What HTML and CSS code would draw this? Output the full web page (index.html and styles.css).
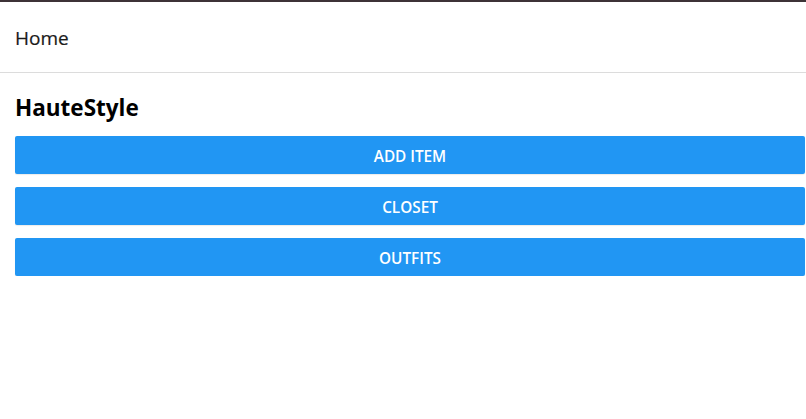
FILE: index.html
```html
<!DOCTYPE html>
<html>
<head>
<meta charset="utf-8">
<link rel="stylesheet" href="styles.css">
</head>
<body>
<div class="topbar"></div>
<header class="header"><span class="header-title">Home</span></header>
<main class="content">
  <h1 class="title">HauteStyle</h1>
  <div class="actions">
    <button class="btn">ADD ITEM</button>
    <button class="btn">CLOSET</button>
    <button class="btn">OUTFITS</button>
  </div>
</main>
</body>
</html>
```
FILE: styles.css
```css
* { box-sizing: border-box; }
html, body { margin: 0; padding: 0; background: #fff; }
body { font-family: "Open Sans", "Noto Sans", sans-serif; color: #222; }
.topbar { height: 2px; background: #3d3337; }
.header {
  height: 71px;
  border-bottom: 1px solid #dcdcdc;
  display: flex;
  align-items: center;
  padding: 2px 15px 0;
}
.header-title { font-size: 19px; font-weight: 500; color: #1a1a1a; -webkit-text-stroke: 0.2px #1a1a1a; }
.content { padding: 20px 1px 0 15px; }
.title {
  margin: 0 0 13px;
  font-size: 22.5px;
  font-weight: 700;
  color: #000;
  line-height: 30px;
}
.actions { display: flex; flex-direction: column; gap: 13px; }
.btn {
  height: 38px;
  border: none;
  border-radius: 2px;
  padding: 2px 0 0;
  background: #2196f3;
  color: #fff;
  font-family: "Open Sans", "Noto Sans", sans-serif;
  font-weight: 600;
  font-size: 15.3px;
  box-shadow: 0 1px 1px rgba(0,0,0,0.08);
}
```
